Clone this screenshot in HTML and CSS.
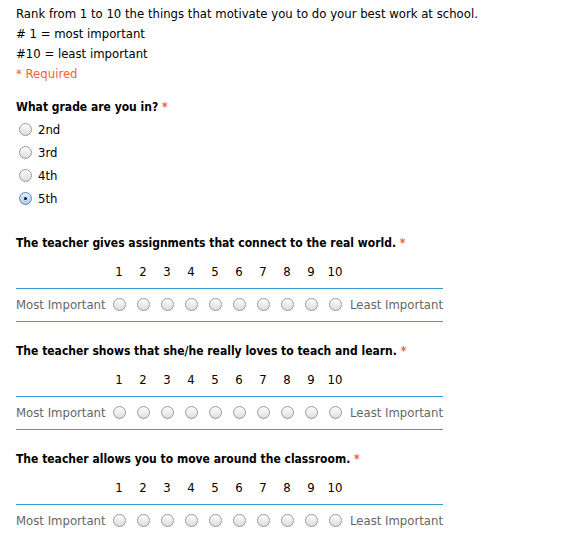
FILE: index.html
```html
<!DOCTYPE html>
<html>
<head>
<meta charset="utf-8">
<link rel="stylesheet" href="styles.css">
</head>
<body>
<div class="form">
  <div class="intro">
    <div>Rank from 1 to 10 the things that motivate you to do your best work at school.</div>
    <div># 1 = most important</div>
    <div>#10 = least important</div>
    <div class="req">* Required</div>
  </div>

  <div class="q grade">
    <div class="title">What grade are you in? <span class="star">*</span></div>
    <label class="opt"><input type="radio" name="g"><span>2nd</span></label>
    <label class="opt"><input type="radio" name="g"><span>3rd</span></label>
    <label class="opt"><input type="radio" name="g"><span>4th</span></label>
    <label class="opt"><input type="radio" name="g" checked><span>5th</span></label>
  </div>

  <div class="q scale">
    <div class="title">The teacher gives assignments that connect to the real world. <span class="star">*</span></div>
    <div class="grid">
      <div class="nums"><span></span><span>1</span><span>2</span><span>3</span><span>4</span><span>5</span><span>6</span><span>7</span><span>8</span><span>9</span><span>10</span><span></span></div>
      <div class="row"><span class="lbl">Most Important</span><input type="radio" name="a"><input type="radio" name="a"><input type="radio" name="a"><input type="radio" name="a"><input type="radio" name="a"><input type="radio" name="a"><input type="radio" name="a"><input type="radio" name="a"><input type="radio" name="a"><input type="radio" name="a"><span class="lbl right">Least Important</span></div>
    </div>
  </div>

  <div class="q scale">
    <div class="title">The teacher shows that she/he really loves to teach and learn. <span class="star">*</span></div>
    <div class="grid">
      <div class="nums"><span></span><span>1</span><span>2</span><span>3</span><span>4</span><span>5</span><span>6</span><span>7</span><span>8</span><span>9</span><span>10</span><span></span></div>
      <div class="row"><span class="lbl">Most Important</span><input type="radio" name="b"><input type="radio" name="b"><input type="radio" name="b"><input type="radio" name="b"><input type="radio" name="b"><input type="radio" name="b"><input type="radio" name="b"><input type="radio" name="b"><input type="radio" name="b"><input type="radio" name="b"><span class="lbl right">Least Important</span></div>
    </div>
  </div>

  <div class="q scale last">
    <div class="title">The teacher allows you to move around the classroom. <span class="star">*</span></div>
    <div class="grid">
      <div class="nums"><span></span><span>1</span><span>2</span><span>3</span><span>4</span><span>5</span><span>6</span><span>7</span><span>8</span><span>9</span><span>10</span><span></span></div>
      <div class="row"><span class="lbl">Most Important</span><input type="radio" name="c"><input type="radio" name="c"><input type="radio" name="c"><input type="radio" name="c"><input type="radio" name="c"><input type="radio" name="c"><input type="radio" name="c"><input type="radio" name="c"><input type="radio" name="c"><input type="radio" name="c"><span class="lbl right">Least Important</span></div>
    </div>
  </div>
</div>
</body>
</html>
```

FILE: styles.css
```css
html, body {
  margin: 0;
  padding: 0;
  background: #fff;
}
body {
  font-family: "DejaVu Sans Condensed", "DejaVu Sans", sans-serif;
  font-size: 13px;
  color: #000;
}
.form {
  padding: 4px 0 0 16px;
}
.intro div {
  line-height: 20px;
}
.req {
  color: #f4603e;
}
.star {
  color: #f4603e;
}
.title {
  font-weight: bold;
  font-size: 12px;
  line-height: 20px;
}
.grade {
  margin-top: 13px;
}
.grade .title {
  margin-bottom: 1px;
}
.opt {
  display: flex;
  align-items: center;
  height: 23px;
  padding-left: 3px;
}
.opt span {
  margin-left: 6px;
}
input[type=radio] {
  -webkit-appearance: none;
  appearance: none;
  width: 13px;
  height: 13px;
  margin: 0;
  border: 1px solid #9a9a9a;
  border-radius: 50%;
  background: linear-gradient(#fdfdfd, #dcdcdc);
  box-sizing: border-box;
  position: relative;
}
input[type=radio]:checked {
  border-color: #5a86b8;
  background: linear-gradient(#e4f0fb, #a9cbec);
}
input[type=radio]:checked::after {
  content: "";
  position: absolute;
  left: 4px;
  top: 4px;
  width: 3px;
  height: 3px;
  border-radius: 50%;
  background: #111;
}
.scale {
  margin-top: 23px;
}
.scale + .scale {
  margin-top: 19px;
}
.grid {
  width: 427px;
}
.nums, .row {
  display: grid;
  grid-template-columns: 91px repeat(10, 24px) 1fr;
  align-items: center;
  justify-items: center;
}
.nums {
  height: 36px;
  padding-top: 1px;
  box-sizing: border-box;
  border-bottom: 1px solid #3a9bd5;
}
.row {
  height: 33px;
  padding-bottom: 2px;
  border-bottom: 1px solid #3a9bd5;
  box-sizing: border-box;
}
.last .row {
  border-bottom-color: transparent;
}
.lbl {
  color: #666;
  justify-self: start;
  white-space: nowrap;
}
.lbl.right {
  justify-self: end;
}
```
